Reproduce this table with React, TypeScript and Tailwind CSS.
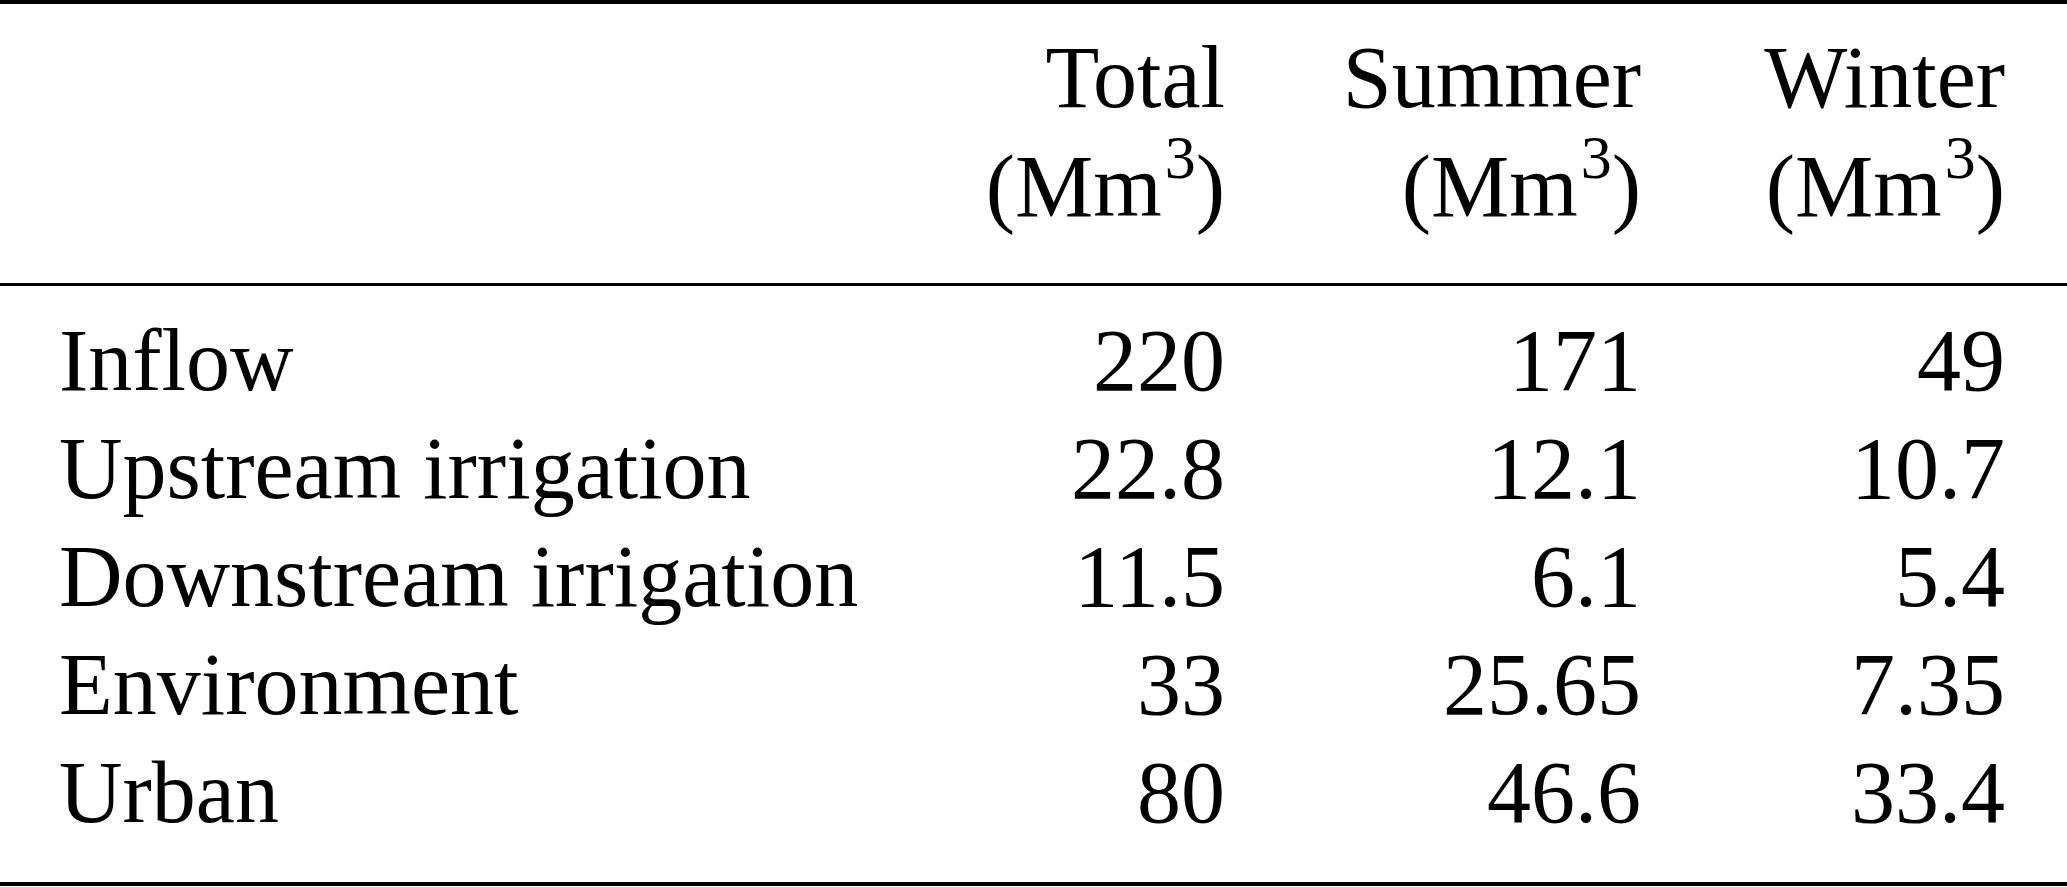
interface Row {
  id: string;
  label: string;
  total: string;
  summer: string;
  winter: string;
}

const rows: Row[] = [
  { id: '1', label: 'Inflow', total: '220', summer: '171', winter: '49' },
  { id: '2', label: 'Upstream irrigation', total: '22.8', summer: '12.1', winter: '10.7' },
  { id: '3', label: 'Downstream irrigation', total: '11.5', summer: '6.1', winter: '5.4' },
  { id: '4', label: 'Environment', total: '33', summer: '25.65', winter: '7.35' },
  { id: '5', label: 'Urban', total: '80', summer: '46.6', winter: '33.4' },
];

const headers = ['Total', 'Summer', 'Winter'];

const grid = 'grid grid-cols-[860px_306px_416px_364px] pl-[59px] pr-[62px]';

// superscript is lifted with a relative offset so the line box keeps its height
const Unit = () => (
  <span>
    (Mm<span className="relative -top-[38px] ml-[3px] text-[62px] leading-none">3</span>)
  </span>
);

const App = () => {
  return (
    <div className="w-[2067px] h-[887px] bg-white text-black font-['Liberation_Serif','Times_New_Roman',serif] text-[88px] leading-[108px]">
      <div className="h-[4px] bg-black" />

      {/* header: two lines per column */}
      <div className="pt-[20px] h-[279px]">
        <div className={`${grid} h-[108px]`}>
          <div />
          {headers.map((h) => (
            <div key={h} className="text-right whitespace-nowrap">
              {h}
            </div>
          ))}
        </div>
        <div className={`${grid} h-[108px] mt-[1px]`}>
          <div />
          {headers.map((h) => (
            <div key={h} className="text-right whitespace-nowrap">
              <Unit />
            </div>
          ))}
        </div>
      </div>

      <div className="h-[3px] bg-black" />

      <div className="pt-[21px] h-[596px]">
        {rows.map((r) => (
          <div key={r.id} className={`${grid} h-[108px]`}>
            <div className="whitespace-nowrap">{r.label}</div>
            <div className="text-right">{r.total}</div>
            <div className="text-right">{r.summer}</div>
            <div className="text-right">{r.winter}</div>
          </div>
        ))}
      </div>

      <div className="h-[4px] bg-black" />
    </div>
  );
};

export default App;
